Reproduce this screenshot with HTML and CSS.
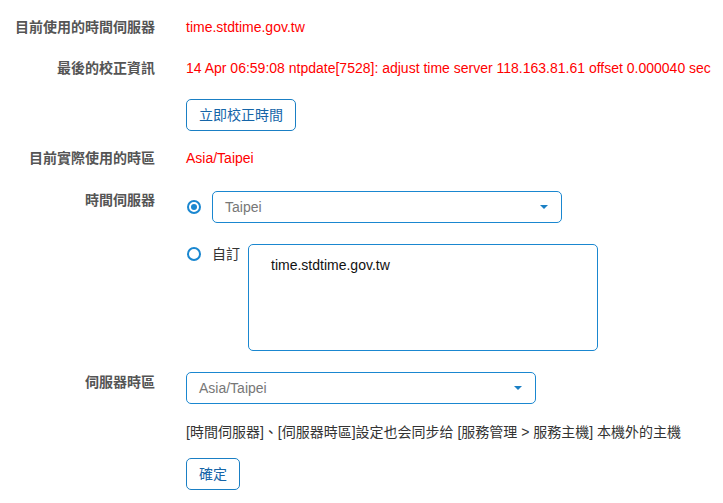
FILE: index.html
```html
<!DOCTYPE html>
<html lang="zh-TW">
<head>
  <meta charset="UTF-8">
  <title>時間伺服器設定</title>
  <meta name="viewport" content="width=device-width, initial-scale=1.0">
  <link rel="stylesheet" href="styles.css">
</head>
<body>
  <div class="form">
    <div class="row">
      <label>目前使用的時間伺服器</label>
      <div class="value red">time.stdtime.gov.tw</div>
    </div>
    <div class="row">
      <label>最後的校正資訊</label>
      <div class="value red nowrap">14 Apr 06:59:08 ntpdate[7528]: adjust time server 118.163.81.61 offset 0.000040 sec</div>
    </div>
    <div class="row btn-row">
      <label></label>
      <div class="value"><button class="btn">立即校正時間</button></div>
    </div>
    <div class="row tz-row">
      <label>目前實際使用的時區</label>
      <div class="value red">Asia/Taipei</div>
    </div>
    <div class="row server-row">
      <label>時間伺服器</label>
      <div class="value">
        <div class="option opt-select">
          <span class="radio checked"></span>
          <div class="select">
            <span>Taipei</span>
            <span class="caret"></span>
          </div>
        </div>
        <div class="option opt-custom">
          <span class="radio"></span>
          <span class="opt-label">自訂</span>
          <div class="textarea">time.stdtime.gov.tw</div>
        </div>
      </div>
    </div>
    <div class="row zone-row">
      <label>伺服器時區</label>
      <div class="value">
        <div class="select">
          <span>Asia/Taipei</span>
          <span class="caret"></span>
        </div>
      </div>
    </div>
    <div class="row note-row">
      <label></label>
      <div class="value note">[時間伺服器]、[伺服器時區]設定也会同步给 [服務管理 &gt; 服務主機] 本機外的主機</div>
    </div>
    <div class="row">
      <label></label>
      <div class="value"><button class="btn">確定</button></div>
    </div>
  </div>
</body>
</html>
```

FILE: styles.css
```css
* {
  box-sizing: border-box;
  margin: 0;
  padding: 0;
}

body {
  font-family: "Liberation Sans", Arial, "Noto Sans CJK TC", sans-serif;
  font-size: 14px;
  line-height: 20px;
  color: #333;
  background: white;
  overflow: hidden;
}

.form {
  padding-top: 17px;
}

.row {
  display: grid;
  grid-template-columns: 155px 1fr;
  column-gap: 31px;
  margin-bottom: 21px;
}

.row label {
  text-align: right;
  font-weight: bold;
  color: #555;
}

.btn-row {
  margin-bottom: 17px;
}

.tz-row {
  margin-bottom: 22px;
}

.server-row {
  margin-bottom: 21px;
}

.zone-row {
  margin-bottom: 18px;
}

.note-row {
  margin-bottom: 16px;
}

.red {
  color: #ff0000;
}

.nowrap {
  white-space: nowrap;
}

.btn {
  font-family: inherit;
  font-size: 14px;
  line-height: 20px;
  color: #1565a8;
  background: white;
  border: 1px solid #1a7fc4;
  border-radius: 5px;
  padding: 5px 12px;
  cursor: pointer;
}

.option {
  display: flex;
}

.opt-select {
  align-items: center;
  margin-top: 1px;
  margin-bottom: 21px;
}

.radio {
  width: 14px;
  height: 14px;
  border: 2px solid #1a87d0;
  border-radius: 50%;
  margin-left: 1px;
  margin-right: 11px;
  flex-shrink: 0;
  display: flex;
  align-items: center;
  justify-content: center;
}

.radio.checked::after {
  content: "";
  width: 6px;
  height: 6px;
  border-radius: 50%;
  background: #1a87d0;
}

.opt-custom .radio {
  margin-top: 3px;
}

.opt-label {
  margin-right: 8px;
  color: #333;
}

.select {
  width: 350px;
  height: 32px;
  border: 1px solid #1a87d0;
  border-radius: 5px;
  padding: 0 12px;
  display: flex;
  align-items: center;
  justify-content: space-between;
  color: #777;
}

.caret {
  width: 0;
  height: 0;
  border-left: 4px solid transparent;
  border-right: 4px solid transparent;
  border-top: 4px solid #1a7fc4;
  margin-right: 1px;
}

.textarea {
  width: 350px;
  height: 107px;
  border: 1px solid #1a87d0;
  border-radius: 5px;
  padding: 10px 22px;
  color: #111;
}

.note {
  color: #333;
  white-space: nowrap;
}
```
